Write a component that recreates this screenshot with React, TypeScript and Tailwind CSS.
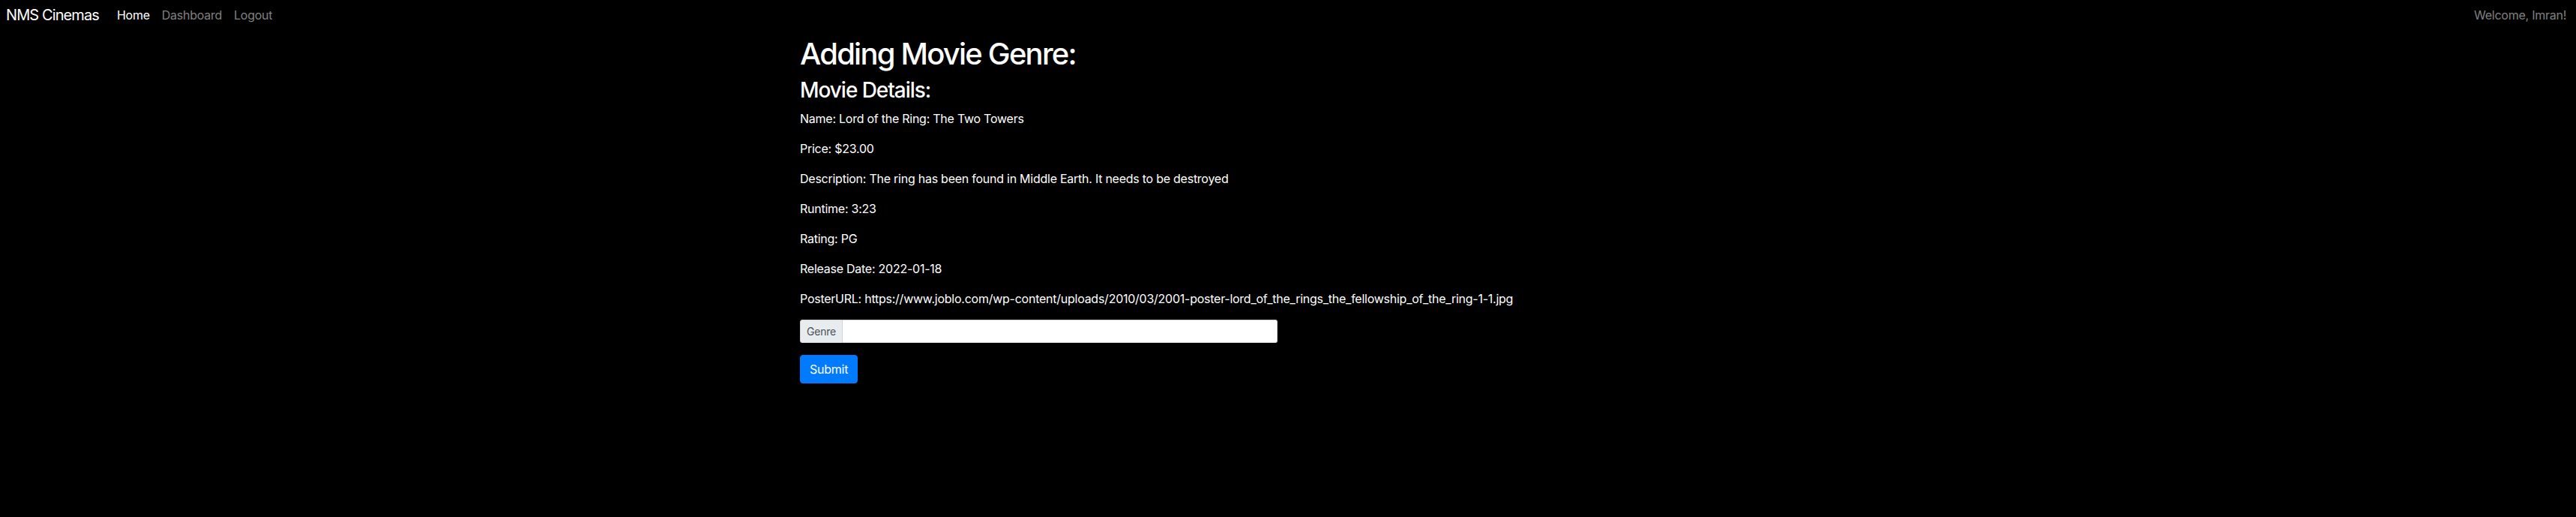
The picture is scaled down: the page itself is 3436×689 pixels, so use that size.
import React from "react";

export default function App() {
  const details = [
    "Name: Lord of the Ring: The Two Towers",
    "Price: $23.00",
    "Description: The ring has been found in Middle Earth. It needs to be destroyed",
    "Runtime: 3:23",
    "Rating: PG",
    "Release Date: 2022-01-18",
    "PosterURL: https://www.joblo.com/wp-content/uploads/2010/03/2001-poster-lord_of_the_rings_the_fellowship_of_the_ring-1-1.jpg",
  ];
  return (
    <div
      className="h-screen overflow-hidden bg-black text-white"
      style={{ fontFamily: 'Inter, "Liberation Sans", Arial, sans-serif' }}
    >
      <nav className="flex h-[40px] items-center justify-between pl-2 pr-[13px]">
        <div className="flex items-center">
          <a className="mr-4 py-[5px] text-[20px] leading-[30px] tracking-[-0.9px] text-white">NMS Cinemas</a>
          <ul className="flex tracking-[-0.25px]">
            <li>
              <a className="block px-2 py-2 text-[16px] leading-[24px] text-white">Home</a>
            </li>
            <li>
              <a className="block px-2 py-2 text-[16px] leading-[24px] text-[#808080]">Dashboard</a>
            </li>
            <li>
              <a className="block px-2 py-2 text-[16px] leading-[24px] text-[#808080]">Logout</a>
            </li>
          </ul>
        </div>
        <span className="text-[16px] leading-[24px] tracking-[-0.25px] text-[#808080]">Welcome, Imran!</span>
      </nav>
      <main className="pl-[1067px] pt-[8px]">
        <h1 className="mb-2 text-[40px] leading-[48px] font-medium tracking-[-1.8px]">Adding Movie Genre:</h1>
        <h3 className="mb-2 text-[28px] leading-[33.6px] font-medium tracking-[-1.05px]">Movie Details:</h3>
        {details.map((d) => (
          <p key={d} className="mb-4 text-[16px] leading-[24px] tracking-[-0.25px]">
            {d}
          </p>
        ))}
        <form onSubmit={(e) => e.preventDefault()}>
          <div className="mb-4 flex h-[31px] w-[637px] items-stretch">
            <span className="flex items-center rounded-l-[3px] border border-[#ced4da] bg-[#e9ecef] px-2 text-[14px] leading-[21px] tracking-[-0.2px] text-[#495057]">
              Genre
            </span>
            <input
              type="text"
              className="flex-1 rounded-r-[3px] border border-l-0 border-[#ced4da] bg-white px-2 text-[14px] text-[#495057] outline-none"
            />
          </div>
          <button
            type="submit"
            className="h-[38px] rounded-[4px] border border-[#007bff] bg-[#007bff] px-3 text-[16px] leading-[24px] tracking-[-0.25px] text-white"
          >
            Submit
          </button>
        </form>
      </main>
    </div>
  );
}
